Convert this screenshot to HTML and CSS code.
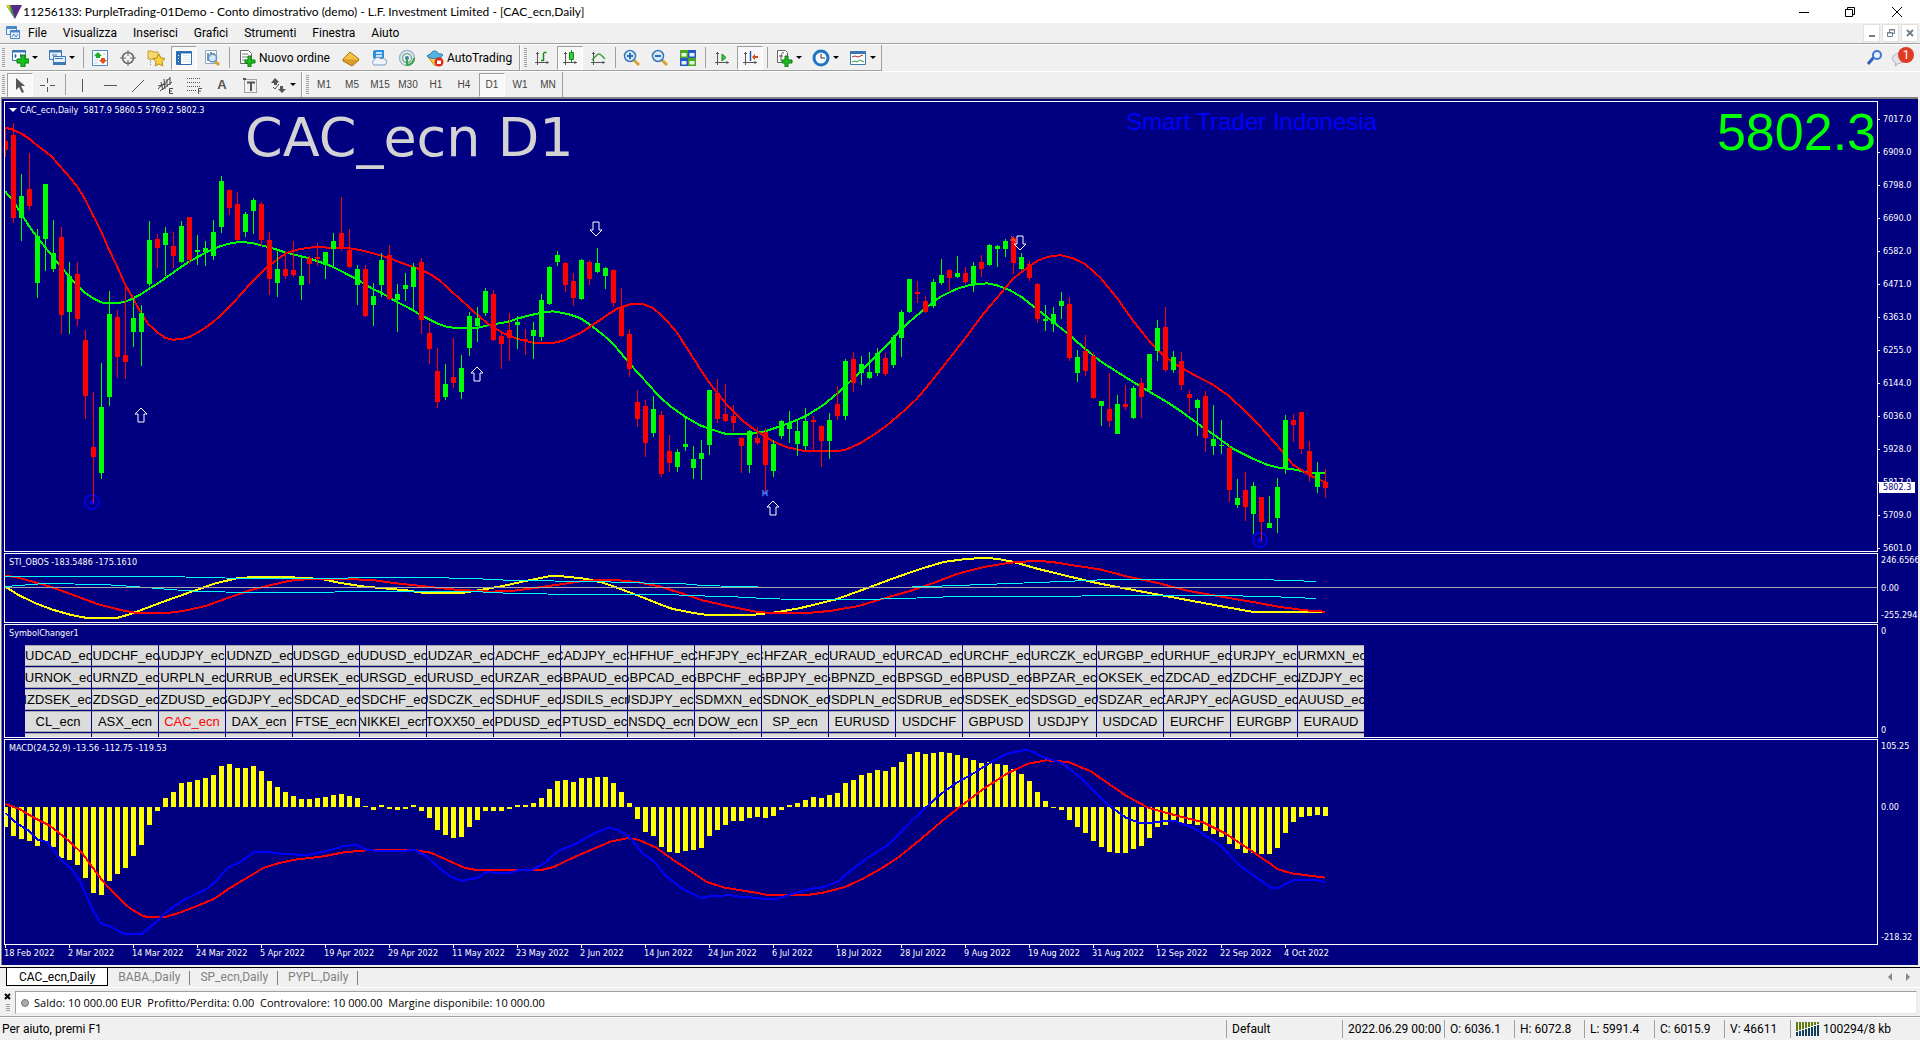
FILE: index.html
```html
<!DOCTYPE html>
<html lang="it">
<head>
<meta charset="utf-8">
<title>11256133: PurpleTrading-01Demo</title>
<link rel="stylesheet" href="styles.css">
</head>
<body>
<div class="app">
  <header class="titlebar">
    <svg class="logo" width="16" height="14" viewBox="0 0 16 14"><path d="M0 0h16L9 14z" fill="#5b2a86"/><path d="M0 0h5l4 14z" fill="#3c9a4a"/><path d="M0 0h3l2 7z" fill="#f2d21b"/></svg>
    <h1 class="title">11256133: PurpleTrading-01Demo - Conto dimostrativo (demo) - L.F. Investment Limited - [CAC_ecn,Daily]</h1>
    <div class="winbtns">
      <button class="winbtn" aria-label="Riduci"><svg width="12" height="12"><path d="M1 6.500h10" stroke="#000"/></svg></button>
      <button class="winbtn" aria-label="Ripristina"><svg width="12" height="12" fill="none" stroke="#000"><path d="M1.500 3.500h7v7h-7zM3.500 3V1.500h7v7H9"/></svg></button>
      <button class="winbtn" aria-label="Chiudi"><svg width="12" height="12" stroke="#000"><path d="M1 1l10 10M11 1L1 11"/></svg></button>
    </div>
  </header>

  <nav class="menubar">
    <svg class="menuicon" width="16" height="16" viewBox="0 0 16 16" fill="#eaf3fc" stroke="#4a86c8"><path d="M1.500 1.500h10v8h-10z"/><path d="M1 3h11" stroke-width="2"/><path d="M5.500 5.500h9v8h-9z"/><path d="M5 6.500h10" stroke-width="2"/><path d="M7 12l2-3 2 3 2-3" fill="none"/></svg>
    <a class="menu" href="#">File</a><a class="menu" href="#">Visualizza</a><a class="menu" href="#">Inserisci</a><a class="menu" href="#">Grafici</a><a class="menu" href="#">Strumenti</a><a class="menu" href="#">Finestra</a><a class="menu" href="#">Aiuto</a>
    <div class="mdibtns">
      <button class="mdibtn" aria-label="Riduci grafico"><svg width="10" height="10"><path d="M2 8h6" stroke="#71808f" stroke-width="2"/></svg></button>
      <button class="mdibtn" aria-label="Ripristina grafico"><svg width="10" height="10" fill="none" stroke="#71808f"><path d="M1.500 4.500h5v4h-5zM1 5h6M3.500 4V1.500h5v4H7M3 2h6"/></svg></button>
      <button class="mdibtn" aria-label="Chiudi grafico"><svg width="10" height="10" stroke="#71808f" stroke-width="2"><path d="M2 2l6 6M8 2L2 8"/></svg></button>
    </div>
  </nav>

  <div class="toolrow">
    <div class="tools">
      <span class="grip"></span>
      <button class="drop" aria-label="Nuovo grafico"><svg width="18" height="18" viewBox="0 0 18 18"><path d="M1.500 1.500h13v10h-13z" fill="#fff" stroke="#3a78b5"/><path d="M1 2.500h14" stroke="#3a78b5" stroke-width="2"/><path d="M4.500 5v4M3 7h3M9.500 5v3" stroke="#3a78b5"/><path d="M10 6h4v4h4v4h-4v4h-4v-4H6v-4h4z" fill="#18c01c" stroke="#0a7a10"/></svg></button>
      <button class="drop" aria-label="Profili"><svg width="18" height="18" viewBox="0 0 18 18" fill="#e8f2fb" stroke="#3a78b5"><path d="M1.500 1.500h12v9h-12z"/><path d="M1 2.500h13" stroke-width="2"/><path d="M5.500 7.500h12v8h-12z"/><path d="M5 14.500h13" stroke-width="3"/><path d="M4 6h5M7 9.500h8"/></svg></button>
      <span class="sep"></span>
      <button class="tool" aria-label="Osservatorio mercato"><svg width="18" height="18" viewBox="0 0 18 18"><path d="M1.500 1.500h15v15h-15z" fill="#fff" stroke="#4a8cc7"/><path d="M3 5h3M3 8h3M12 5h3M3 11h4M3 14h4" stroke="#b8cde0"/><path d="M7 3l4 4H9v2H5V7H3z" fill="#1fae28"/><path d="M12 15l-4-4h2V9h4v2h2z" fill="#e2501b"/></svg></button>
      <button class="tool" aria-label="Finestra dati"><svg width="18" height="18" viewBox="0 0 18 18" fill="none" stroke="#666"><circle cx="9" cy="9" r="5.500" stroke-width="1.500"/><path d="M9 1v6M9 11v6M1 9h6M11 9h6"/></svg></button>
      <button class="tool" aria-label="Navigatore"><svg width="18" height="18" viewBox="0 0 18 18"><path d="M1 2h4l1 1h5v7H1z" fill="#f6d873" stroke="#c79a28"/><path d="M3.500 11v6" stroke="#888" stroke-dasharray="1 1"/><path d="M12 5l2 4 4 .6-3 3 .8 4.400-3.800-2-3.800 2 .8-4.400-3-3L10 9z" fill="#fbd03a" stroke="#b98a14"/></svg></button>
      <button class="tool pressed" aria-label="Terminale"><svg width="18" height="18" viewBox="0 0 18 18"><path d="M1.500 2.500h15v13h-15z" fill="#fff" stroke="#2f6fb5"/><path d="M1 3.500h16" stroke="#2f6fb5" stroke-width="2"/><path d="M2 3h4v12H2z" fill="#2f6fb5"/><path d="M3 6.500h1M3 9.500h1M3 12.500h1" stroke="#fff"/><path d="M8 6.500h7M8 8.500h7M8 10.500h7M8 12.500h7" stroke="#dde6ee"/></svg></button>
      <button class="tool" aria-label="Tester strategia"><svg width="18" height="18" viewBox="0 0 18 18"><path d="M2.500 1.500h11v13h-11z" fill="#fff" stroke="#8fa7bd"/><path d="M5 4v8M8 3v5M11 4v3" stroke="#7d93a8" stroke-width="2"/><path d="M12 12l4 4" stroke="#d8a431" stroke-width="3"/><circle cx="9.500" cy="9" r="4" fill="#cbe6fa" fill-opacity=".8" stroke="#5d92c0" stroke-width="1.500"/></svg></button>
      <span class="sep"></span>
      <button class="wide"><svg width="18" height="18" viewBox="0 0 18 18"><path d="M2.500 1.500h8l3 3v10h-11z" fill="#fff" stroke="#666"/><path d="M4 5h6M4 8h6M4 11h4" stroke="#777"/><path d="M10 7h3v4h4v3h-4v4h-3v-4H7v-3h3z" fill="#18c01c" stroke="#0a7a10"/></svg>Nuovo ordine</button>
      <button class="tool" aria-label="MetaEditor"><svg width="18" height="18" viewBox="0 0 18 18"><path d="M1 10l7-7 9 7-6 6z" fill="#f2c245" stroke="#a87716"/><path d="M1 10v2l9 5 7-6" fill="#d99c25" stroke="#a87716"/></svg></button>
      <button class="tool" aria-label="Hosting"><svg width="18" height="18" viewBox="0 0 18 18"><path d="M3 2l2-1h9v9H5L3 9z" fill="#2b8fe0"/><path d="M6 4h6M6 7h6" stroke="#fff" stroke-width="1.500"/><path d="M4 16a3 3 0 010-5 4 4 0 017-1 3.500 3.500 0 014 6z" fill="#eef4fa" stroke="#7f9cc0"/></svg></button>
      <button class="tool" aria-label="Segnali"><svg width="18" height="18" viewBox="0 0 18 18" fill="none"><circle cx="9" cy="9" r="7.500" stroke="#9bb8cf" stroke-width="1.500"/><circle cx="9" cy="9" r="4.500" stroke="#7fae96" stroke-width="1.500"/><path d="M9 16a7 7 0 007-7" stroke="#3aa54a" stroke-width="2"/><circle cx="9" cy="9" r="2" fill="#3e7fc2"/><path d="M9 9v8" stroke="#3aa54a" stroke-width="2"/></svg></button>
      <button class="wide auto"><svg width="18" height="18" viewBox="0 0 18 18"><path d="M2 8l7 9 6-4V8z" fill="#f3cf52" stroke="#ba8d1f"/><path d="M1 7c1-2 3-1 4-2 0-4 7-4 7 0 1 0 3-1 5 1-3 4-12 5-16 1z" fill="#57b3e4" stroke="#2e7fb5"/><circle cx="13" cy="13" r="4.500" fill="#e02818"/><path d="M11 11.500h4v3.500h-4z" fill="#fff"/></svg>AutoTrading</button>
    </div>
    <div class="tools">
      <span class="grip"></span>
      <button class="tool" aria-label="Grafico a barre"><svg width="18" height="18" viewBox="0 0 18 18" fill="none" stroke="#555"><path d="M4.500 3v13M2 13.500h14M3 4.500h3M14 12v3"/><path d="M10.500 4v8M13.500 3.500h-3M8 11.500h3" stroke="#188a1d" stroke-width="1.500"/></svg></button>
      <button class="tool pressed" aria-label="Candele giapponesi"><svg width="18" height="18" viewBox="0 0 18 18" fill="none" stroke="#555"><path d="M4.500 3v13M2 13.500h14M3 4.500h3M14 12v3"/><path d="M10.500 1v12" stroke="#188a1d"/><path d="M8.500 3.500h4v7h-4z" fill="#2fd03a" stroke="#188a1d"/></svg></button>
      <button class="tool" aria-label="Grafico a linea"><svg width="18" height="18" viewBox="0 0 18 18" fill="none" stroke="#555"><path d="M4.500 3v13M2 13.500h14M3 4.500h3M14 12v3"/><path d="M3 11c3-3 5-6 7-6s3 2 6 5" stroke="#3a9e40" stroke-width="1.500"/></svg></button>
      <span class="sep"></span>
      <button class="tool" aria-label="Zoom avanti"><svg width="18" height="18" viewBox="0 0 18 18"><path d="M11 11l5 5" stroke="#d8a431" stroke-width="3"/><circle cx="7" cy="7" r="5.500" fill="#d5ebfb" stroke="#3a78b5" stroke-width="1.500"/><path d="M4 7h6M7 4v6" stroke="#2f6fb5" stroke-width="2"/></svg></button>
      <button class="tool" aria-label="Zoom indietro"><svg width="18" height="18" viewBox="0 0 18 18"><path d="M11 11l5 5" stroke="#d8a431" stroke-width="3"/><circle cx="7" cy="7" r="5.500" fill="#d5ebfb" stroke="#3a78b5" stroke-width="1.500"/><path d="M4 7h6" stroke="#2f6fb5" stroke-width="2"/></svg></button>
      <button class="tool" aria-label="Affianca finestre"><svg width="18" height="18" viewBox="0 0 18 18"><path d="M1 1h8v8H1zM9 9h8v8H9z" fill="#48a81e"/><path d="M9 1h8v8H9zM1 9h8v8H1z" fill="#2458c8"/><path d="M2.500 4h5v3.500h-5zM10.500 4h5v3.500h-5zM2.500 12h5v3.500h-5zM10.500 12h5v3.500h-5z" fill="#e8f2ea"/></svg></button>
      <span class="sep"></span>
      <button class="tool" aria-label="Scorrimento automatico"><svg width="18" height="18" viewBox="0 0 18 18" fill="none" stroke="#555"><path d="M4.500 3v13M2 13.500h14M3 4.500h3M14 12v3"/><path d="M9 5l4 3.500L9 12z" fill="#2fd03a" stroke="#188a1d"/></svg></button>
      <button class="tool pressed" aria-label="Sposta grafico"><svg width="18" height="18" viewBox="0 0 18 18" fill="none" stroke="#555"><path d="M4.500 3v13M2 13.500h14M3 4.500h3M14 12v3"/><path d="M9.500 2v10" stroke="#2458a8" stroke-width="1.500"/><path d="M11 8l3-3v2h3v2h-3v2z" fill="#d4491c" stroke="none"/></svg></button>
      <span class="sep"></span>
      <button class="drop" aria-label="Indicatori"><svg width="18" height="18" viewBox="0 0 18 18"><path d="M2.500 1.500h8l2 2v10h-10z" fill="#fff" stroke="#666"/><path d="M9 4c-3-1-3 2-3 8M4 7h4" fill="none" stroke="#555"/><path d="M10 7h3v4h4v3h-4v4h-3v-4H7v-3h3z" fill="#18c01c" stroke="#0a7a10"/></svg></button>
      <button class="drop" aria-label="Periodi"><svg width="18" height="18" viewBox="0 0 18 18"><circle cx="9" cy="9" r="7" fill="#f4f8fc" stroke="#1f72c4" stroke-width="3"/><path d="M9 5v4h4" fill="none" stroke="#333"/></svg></button>
      <button class="drop" aria-label="Modelli"><svg width="18" height="18" viewBox="0 0 18 18"><path d="M1.500 2.500h15v13h-15z" fill="#fff" stroke="#3a78b5"/><path d="M1 3.500h16" stroke="#3a78b5" stroke-width="3"/><path d="M3 8l3-1 3 1 5-2" fill="none" stroke="#a03a20"/><path d="M3 13l3-1 2 1 3-2 4 2" fill="none" stroke="#2f9a38"/></svg></button>
    </div>
    <div class="alerts">
      <button class="tool" aria-label="Cerca"><svg width="16" height="16" viewBox="0 0 16 16"><path d="M1 15l6-7" stroke="#2f62c4" stroke-width="3"/><circle cx="10" cy="6" r="4" fill="#eef4ff" stroke="#3f74d6" stroke-width="2"/></svg></button>
      <button class="news" aria-label="Notifiche"><svg width="24" height="20" viewBox="0 0 24 20"><path d="M9 6c-8 0-10 8-4 10l-1 3 4-3c10 0 10-10 1-10z" fill="#e3e3e8" stroke="#b0b0b8"/><circle cx="15" cy="8" r="8" fill="#df3a22"/></svg><span class="badge">1</span></button>
    </div>
  </div>

  <div class="toolrow lines">
    <div class="tools">
      <span class="grip"></span>
      <button class="tool pressed" aria-label="Cursore"><svg width="18" height="18" viewBox="0 0 18 18"><path d="M5 2v12l3-3 3 6 2-1-3-6h4z" fill="#555"/></svg></button>
      <button class="tool" aria-label="Croce"><svg width="18" height="18" viewBox="0 0 18 18"><path d="M8.500 2v5M8.500 11v5M1 9.500h5M11 9.500h5" stroke="#555"/></svg></button>
      <span class="sep"></span>
      <button class="tool" aria-label="Linea verticale"><svg width="18" height="18"><path d="M9.500 3v13" stroke="#555"/></svg></button>
      <button class="tool" aria-label="Linea orizzontale"><svg width="18" height="18"><path d="M3 9.500h13" stroke="#555"/></svg></button>
      <button class="tool" aria-label="Linea di tendenza"><svg width="18" height="18"><path d="M3 16L15 4" stroke="#555"/></svg></button>
      <button class="tool" aria-label="Canale equidistante"><svg width="18" height="18" viewBox="0 0 18 18" stroke="#444" fill="none"><path d="M1 13L13 2M3 15L15 6M4 6l2 8M7 3l1 10M10 3v8M13 1v8M1 10l8-2"/><path d="M16 12.500h-3.500v5H16M12 15h3" /></svg></button>
      <button class="tool" aria-label="Fibonacci"><svg width="18" height="18" viewBox="0 0 18 18" stroke="#555" fill="none"><path d="M2 2.500h14M2 6.500h14M2 10.500h14M2 14.500h9" stroke-dasharray="1 1"/><path d="M13.500 18v-5.500H17M13 15h3"/></svg></button>
      <button class="tool letter" aria-label="Testo">A</button>
      <button class="tool" aria-label="Etichetta"><svg width="18" height="18" viewBox="0 0 18 18" stroke="#555" fill="none"><path d="M3.500 3.500h12v13h-12z" stroke-dasharray="1 1"/><path d="M6 6.500h8M10 6v9" stroke-width="2"/><path d="M2 2h3v2H2z" fill="#555" stroke="none"/></svg></button>
      <button class="drop" aria-label="Frecce"><svg width="18" height="18" viewBox="0 0 18 18" fill="#555"><path d="M6 2l4 4-2 1v2H5V7H2zM13 17l-4-4h2v-3h3v3h3z"/><path d="M4 11l2 2 4-5" fill="none" stroke="#555"/></svg></button>
    </div>
    <div class="tools">
      <span class="grip"></span>
      <button class="tool">M1</button><button class="tool">M5</button><button class="tool">M15</button><button class="tool">M30</button><button class="tool">H1</button><button class="tool">H4</button><button class="tool pressed">D1</button><button class="tool">W1</button><button class="tool">MN</button>
    </div>
  </div>

  <main class="chart">
    <section class="panel">
      <svg class="plot" id="price"></svg>
      <p class="caption"><span class="caret"></span>CAC_ecn,Daily&nbsp; 5817.9 5860.5 5769.2 5802.3</p>
      <p class="symbol">CAC_ecn D1</p>
      <p class="brand">Smart Trader Indonesia</p>
      <p class="quote">5802.3</p>
    </section>
    <div class="axis prices">
      <span>7017.0</span><span>6909.0</span><span>6798.0</span><span>6690.0</span><span>6582.0</span><span>6471.0</span><span>6363.0</span><span>6255.0</span><span>6144.0</span><span>6036.0</span><span>5928.0</span><span>5817.0</span><span>5709.0</span><span>5601.0</span>
      <b class="last">5802.3</b>
    </div>

    <section class="panel">
      <svg class="plot" id="obos"></svg>
      <p class="caption">STI_OBOS -183.5486 -175.1610</p>
    </section>
    <div class="axis"><span>246.6566</span><span>0.00</span><span>-255.2944</span></div>

    <section class="panel">
      <p class="caption">SymbolChanger1</p>
      <div class="symbols" id="symbols"></div>
    </section>
    <div class="axis"><span>0</span><span>0</span></div>

    <section class="panel">
      <svg class="plot" id="macd"></svg>
      <p class="caption">MACD(24,52,9) -13.56 -112.75 -119.53</p>
    </section>
    <div class="axis macd"><span>105.25</span><span>0.00</span><span>-218.32</span></div>

    <div class="dates"><span>18 Feb 2022</span><span>2 Mar 2022</span><span>14 Mar 2022</span><span>24 Mar 2022</span><span>5 Apr 2022</span><span>19 Apr 2022</span><span>29 Apr 2022</span><span>11 May 2022</span><span>23 May 2022</span><span>2 Jun 2022</span><span>14 Jun 2022</span><span>24 Jun 2022</span><span>6 Jul 2022</span><span>18 Jul 2022</span><span>28 Jul 2022</span><span>9 Aug 2022</span><span>19 Aug 2022</span><span>31 Aug 2022</span><span>12 Sep 2022</span><span>22 Sep 2022</span><span>4 Oct 2022</span></div>
  </main>

  <nav class="tabs">
    <button class="tab active">CAC_ecn,Daily</button><button class="tab">BABA.,Daily</button><button class="tab">SP_ecn,Daily</button><button class="tab">PYPL.,Daily</button>
    <div class="scroll"><button class="arrow left" aria-label="Indietro"></button><button class="arrow right" aria-label="Avanti"></button></div>
  </nav>

  <section class="terminal">
    <div class="termside"><button class="termclose" aria-label="Chiudi terminale"><svg width="7" height="7" stroke="#000" stroke-width="2"><path d="M1 1l5 5M6 1L1 6"/></svg></button><span class="hgrip"></span></div>
    <p class="balance"><span class="dot"></span>Saldo: 10 000.00 EUR&nbsp; Profitto/Perdita: 0.00&nbsp; Controvalore: 10 000.00&nbsp; Margine disponibile: 10 000.00</p>
  </section>

  <footer class="status">
    <span class="help">Per aiuto, premi F1</span>
    <span class="cell w116">Default</span>
    <span class="cell w102">2022.06.29 00:00</span>
    <span class="cell w70">O: 6036.1</span>
    <span class="cell w70">H: 6072.8</span>
    <span class="cell w70">L: 5991.4</span>
    <span class="cell w70">C: 6015.9</span>
    <span class="cell w66">V: 46611</span>
    <span class="cell w130"><svg width="24" height="14" viewBox="0 0 24 14"><path d="M1 0v9M4 0v8M7 0v7M10 0v6M13 0v5M16 0v4M19 0v3M22 0v2" stroke="#5f7d0c" stroke-width="2"/><path d="M1 14v-4M4 14V9M7 14V8M10 14V7M13 14V6M16 14V5M19 14V4M22 14V3" stroke="#123f5c" stroke-width="2"/></svg>100294/8 kb</span>
  </footer>
</div>
<script src="chart.js"></script>
</body>
</html>
```
FILE: styles.css
```css
* { box-sizing: border-box; }
body { margin: 0; background: #f0f0f0; color: #000; font: 12px/16px Roboto, "Noto Sans", sans-serif; }
p, h1 { margin: 0; font-weight: normal; }
button { margin: 0; padding: 0; border: 0; background: none; color: inherit; font: inherit; }
a { color: inherit; text-decoration: none; }
svg { display: block; flex: none; }

.app { display: flex; flex-direction: column; min-height: 100vh; }

.titlebar { display: flex; align-items: center; height: 23px; padding-left: 6px; background: #fff; }
.title { flex: 1; padding-left: 1px; font: 12px/16px Lato, "Noto Sans", sans-serif; white-space: nowrap; }
.winbtns { display: flex; height: 20px; }
.winbtn { display: grid; place-items: center; width: 46px; }
.winbtn:last-child { width: 47px; }

.menubar { display: flex; align-items: center; height: 21px; border-bottom: 1px solid #a0a0a0; }
.menuicon { margin: 0 6px 0 5px; }
.menu { margin-right: 16px; }
.menu:first-of-type { padding-left: 1px; }
.mdibtns { display: flex; gap: 2px; margin-left: auto; padding-right: 2px; }
.mdibtn { display: grid; place-items: center; width: 17px; height: 18px; background: #fff; border: 1px solid #e0e0e0; }

.toolrow { display: flex; height: 27px; border-top: 1px solid #fff; }
.tools { display: flex; align-items: center; padding-left: 2px; border-right: 1px solid #a0a0a0; border-bottom: 1px solid #a0a0a0; }
.toolrow .tools + .tools { padding-left: 3px; border-left: 1px solid #fff; }
.grip { width: 3px; height: 20px; margin-right: 1px; background: repeating-linear-gradient(#a0a0a0 0 1px, #f0f0f0 1px 2px); }
.tool { display: grid; place-items: center; width: 28px; height: 24px; }
.pressed { border: 1px solid; border-color: #a0a0a0 #fff #fff #a0a0a0; background: #f8f8f8; width: 26px; margin: 0 1px; }
.sep { width: 6px; height: 21px; background: linear-gradient(#a0a0a0, #a0a0a0) 3px 0 / 1px 100% no-repeat; }
.drop { display: flex; align-items: center; gap: 3px; width: 37px; height: 24px; padding-left: 5px; }
.drop::after, .caret { content: ""; border: 3px solid transparent; border-top-color: #000; border-bottom: 0; }
.wide { display: flex; align-items: center; gap: 3px; height: 24px; width: 105px; padding-left: 6px; white-space: nowrap; }
.wide.auto { width: 98px; padding-left: 5px; }
.lines { height: 26px; }
.lines .tools { border-bottom: 0; }
.lines .tool { color: #444; font: 10px/12px "Liberation Sans", sans-serif; }
.lines .letter { font: bold 13px/16px "Liberation Sans", sans-serif; color: #555; }
.alerts { display: flex; align-items: center; margin-left: auto; padding-right: 5px; gap: 2px; height: 24px; }
.news { position: relative; height: 20px; }
.badge { position: absolute; right: 1px; top: 0; width: 16px; line-height: 16px; text-align: center; color: #fff; }

.chart { flex: 1; display: grid; grid-template-columns: minmax(0, 1fr) 40px; grid-template-rows: minmax(451px, 1fr) 70px 114px 206px 19px; row-gap: 1px; margin-right: 2px; margin-left: 1px; padding: 2px 0 0 2px; border-top: 2px solid #808080; border-left: 1px solid #808080; background: #000080; color: #fff; overflow: hidden; font: 9px/10px "DejaVu Sans Condensed", "Noto Sans", sans-serif; }
.panel { position: relative; border: 1px solid #fff; overflow: hidden; }
.plot { width: 100%; height: 100%; position: absolute; inset: 0; }
.caption { position: relative; display: flex; align-items: center; padding: 3px 4px; white-space: nowrap; }
.caret { border-width: 4px 4px 0; border-top-color: #fff; margin-right: 3px; }
.symbol, .brand, .quote { position: absolute; white-space: nowrap; }
.symbol { left: 240px; top: 4px; font: 54px/64px "DejaVu Sans", sans-serif; color: #d3d3d3; }
.brand { right: 500px; top: 6px; font: 24px/28px "Liberation Sans", sans-serif; color: #0000ff; }
.quote { right: 1px; top: 0; font: 52px/60px "Liberation Sans", sans-serif; color: #00ff00; }

.axis { display: flex; flex-direction: column; justify-content: space-between; padding: 2px 0 3px 3px; min-width: 0; }
.axis.macd span:nth-child(2) { margin: 51px 0 auto; }
.axis.macd { justify-content: flex-start; }
.prices { position: relative; justify-content: flex-start; gap: 23px; height: 451px; padding: 13px 0 0 5px; }
.prices span { position: relative; }
.prices span::before { content: ""; position: absolute; left: -5px; top: 5px; width: 2px; height: 1px; background: #fff; }
.last { position: absolute; left: 1px; top: 381px; width: 36px; padding-left: 4px; background: #fff; color: #000080; font-weight: normal; line-height: 11px; }

.symbols { display: grid; grid-template-columns: repeat(20, 66px); grid-auto-rows: 21px; gap: 1px; padding: 4px 0 0 20px; }
.sym { display: flex; justify-content: center; align-items: center; overflow: hidden; border: 1px solid #a9a9a9; border-width: 1px 0; background: #dcdcdc; color: #000; font: 13px/18px "Liberation Sans", sans-serif; white-space: nowrap; }
.sym.on { color: #ff0000; }

.dates { grid-column: 1 / -1; display: flex; margin-top: -1px; padding-left: 1px; }
.dates span { position: relative; flex: none; width: 64px; line-height: 17px; white-space: nowrap; text-indent: -1px; }
.dates span::before { content: ""; position: absolute; left: 0; top: 0; width: 1px; height: 3px; background: #fff; }

.tabs { display: flex; height: 21px; margin-top: 2px; padding: 0 0 1px 6px; border-top: 1px solid #000; border-bottom: 1px solid #fff; }
.tab { padding: 0 10px; color: #808080; background: linear-gradient(#808080, #808080) right 3px / 1px 14px no-repeat; }
.tab.active { padding: 0 12px; border: 1px solid #000; border-top: 0; background: #fff; color: #000; }
.scroll { display: flex; align-items: center; gap: 14px; margin-left: auto; padding-right: 10px; }
.arrow { border: 4px solid transparent; }
.arrow.left { border-left: 0; border-right-color: #888; }
.arrow.right { border-right: 0; border-left-color: #888; }

.terminal { display: flex; padding: 3px 3px 2px 0; border-bottom: 1px solid #a0a0a0; }
.termside { display: flex; flex-direction: column; align-items: center; gap: 4px; width: 15px; padding-top: 2px; }
.termclose { height: 7px; }
.hgrip { width: 4px; height: 8px; background: repeating-linear-gradient(#a0a0a0 0 1px, #f0f0f0 1px 2px); }
.balance { flex: 1; display: flex; align-items: center; height: 23px; padding-left: 5px; border: 1px solid; border-color: #a0a0a0 #e8e8e8 #e8e8e8 #a0a0a0; background: #fff; white-space: nowrap; font: 11px/16px "Open Sans", "Noto Sans", sans-serif; }
.dot { width: 8px; height: 8px; margin-right: 5px; border: 1px solid #777; border-radius: 4px; background: #aaa; }

.status { display: flex; align-items: center; height: 23px; padding-left: 2px; border-top: 1px solid #fff; white-space: nowrap; }
.help { flex: 1; }
.cell { display: flex; align-items: center; gap: 3px; height: 18px; padding-left: 5px; border-left: 1px solid #a0a0a0; }
.w116 { width: 116px; }
.w102 { width: 102px; }
.w70 { width: 70px; }
.w66 { width: 66px; }
.w130 { width: 130px; }
```
FILE: chart.js
```js
const NS = 'http://www.w3.org/2000/svg';
const UP = '#00ff00', DOWN = '#ff0000', STEP = 8;

function add(parent, tag, attrs) {
  const el = document.createElementNS(NS, tag);
  for (const k in attrs) el.setAttribute(k, attrs[k]);
  parent.appendChild(el);
  return el;
}

/* Three value units per pixel; each segment is [x origin, x units per pixel, points].
   Hairlines are snapped to pixel rows so that flat stretches stay solid. */
function trace(svg, top, color, width, segments) {
  const pts = segments.flatMap(([ox, k, s]) => s.trim().split(/\s+/).map(p => {
    const [x, y] = p.split(',').map(Number);
    const py = (y + 1) / 3 - top;
    return `${(ox + x / k - 5).toFixed(1)},${width === 1 ? Math.floor(py) + 0.5 : py.toFixed(1)}`;
  }));
  add(svg, 'polyline', { points: pts.join(' '), fill: 'none', stroke: color, 'stroke-width': width, 'shape-rendering': 'crispEdges' });
}

/* Candles: direction, high, body top, body bottom, low. */
const candles = `R97,138,165,185 R84,120,369,384 G237,303,369,438 R174,282,333,345 G402,423,564,609 G267,267,432,528 G375,474,522,531 R396,426,660,717 G501,543,651,717 R501,537,672,693
R705,735,903,972 R891,1056,1086,1224 G804,936,1134,1152 G588,657,906,933 R645,666,786,849 R570,780,801,852 G609,669,711,756 G630,654,711,813 G378,435,567,573 R417,432,459,519
G396,414,450,543 R411,453,483,519 G378,393,501,504 R366,366,495,507 G420,465,471,510 G438,459,471,513 G375,411,483,495 G243,258,396,414 R282,285,339,360 R291,327,435,438
G351,357,411,426 G309,315,348,417 R321,327,435,453 R411,435,552,600 G465,522,564,606 R468,522,543,552 R438,525,540,546 G486,543,570,615 R483,489,507,567 R444,486,492,513
G471,471,510,552 G414,438,462,516 R306,414,462,468 R402,465,516,519 G510,522,570,630 R510,522,663,666 G564,603,630,693 G474,495,570,606 R450,480,612,615 G567,597,615,711
G534,570,582,618 G504,516,576,645 R489,501,675,717 R684,714,762,807 R759,828,921,939 G807,867,906,915 R729,846,864,879 G780,819,891,912 G651,663,759,783 G636,669,693,741
G579,588,654,663 R585,597,735,738 R714,723,747,822 R654,705,729,798 G663,681,690,762 R702,732,738,780 G681,705,723,792 G597,615,726,738 G513,516,627,630 G468,480,501,513
R501,504,570,591 R534,558,609,633 G492,495,612,615 R495,501,552,570 G459,504,531,534 G516,519,543,582 R522,525,624,636 R579,639,723,726 R702,717,822,846 R885,921,972,996
R915,933,1044,1086 G903,942,1014,1026 R948,960,1137,1146 R1020,1068,1104,1131 G1062,1071,1116,1131 G963,1047,1056,1068 G1053,1092,1119,1152 G1035,1074,1092,1155 G885,885,1050,1080 R852,894,972,984
R867,957,978,981 R930,963,984,1008 R1026,1029,1053,1134 G1005,1008,1110,1134 R996,1029,1044,1050 R999,1011,1110,1195 G1035,1047,1128,1146 G975,978,1023,1032 G948,984,1002,1044 G975,1008,1047,1083
G939,978,1053,1065 R963,975,981,1065 R990,993,1038,1116 G954,975,1038,1092 R873,927,963,975 G792,798,963,975 R771,792,864,891 G783,807,834,870 G771,831,849,852 G759,774,834,843
R774,789,837,843 G720,726,810,819 G645,651,729,786 G552,552,651,654 R558,591,597,624 R603,618,651,654 G552,561,633,639 G492,540,564,570 R522,525,549,591 G483,534,546,549
R516,534,561,567 G501,513,570,591 R480,501,522,546 G447,450,510,513 G450,453,462,516 G432,438,462,486 R423,429,504,537 G474,486,522,525 R498,507,549,558 R564,567,672,684
G630,672,678,708 G636,657,687,711 G591,618,633,672 R606,627,789,798 G765,786,834,861 R720,768,828,843 R771,783,909,912 G918,918,933,993 R834,942,978,996 G900,927,1017,1017
R870,927,936,945 G873,879,969,972 R849,864,906,969 G777,777,885,888 G675,699,768,798 R636,696,825,831 G768,786,825,834 R771,798,870,885 R885,897,909,954 G912,915,939,1023
R888,903,1029,1071 G930,1032,1053,1080 G975,1050,1053,1077 R1050,1059,1185,1221 G1152,1209,1230,1239 R1131,1185,1236,1278 G1161,1173,1257,1317 R1206,1206,1281,1338 G1203,1284,1299,1299 G1149,1176,1269,1314
G960,975,1119,1137 R957,975,990,1041 R951,951,1062,1077 R1038,1068,1140,1161 G1101,1131,1176,1194 R1122,1161,1179,1209`.split(/\s+/);

const price = document.getElementById('price');
const arrow = (x, y, dir) => add(price, 'path', {
  d: 'M0 -7L6 -1H3V7H-3V-1H-6Z', transform: `translate(${x - 5} ${y - 102})${dir < 0 ? ' scale(1 -1)' : ''}`, fill: 'none', stroke: '#fff', 'stroke-width': 1
});
for (const x of [[92, 502], [1260, 540]]) {
  add(price, 'circle', { cx: x[0] - 5, cy: x[1] - 102, r: 7, fill: 'none', stroke: '#0000ff', 'stroke-width': 1.5 });
  add(price, 'circle', { cx: x[0] - 5, cy: x[1] - 102, r: 2.5, fill: '#0000ff' });
}
trace(price, 7, UP, 2, [[0, 1, `5,288 13,315 21,355 29,392 37,425 45,455 53,485 61,514 69,543 77,570 85,592 93,609 101,621 107,624 115,624 125,620 133,609 141,597 149,580 157,566 165,549 173,532 181,515 189,499 197,486 205,473 213,461 221,452 229,445 237,441 245,441 253,444 261,450 269,456 277,463 285,471 293,477 301,483 309,489 317,497 325,505 333,515 341,527 349,540 357,552 365,567 373,581 381,592 389,606 397,620 405,632 413,645 421,660 429,672 437,684 445,693 453,697 461,699 477,698 488,690 507,680 523,665 540,653 553,648 568,656 580,668 590,688 603,718 613,745 627,795 637,830 648,865 658,900 670,932 685,964 700,990 717,1008 727,1017 748,1017 765,1008 782,991 797,974 807,960 823,930 837,895 853,850 870,800 887,750 900,705 913,670 925,640 940,605 957,580 970,569 987,564 997,570 1010,585 1022,606 1033,632 1047,665 1067,713 1083,755 1100,797 1120,835 1143,878 1167,920 1183,952 1200,990 1217,1025 1233,1060 1253,1090 1267,1108 1280,1118 1293,1122 1307,1131 1325,1134`]]);
trace(price, 7, DOWN, 2, [[0, 1, `5,97 12,102 22,116 30,132 37,150 45,168 52,185 60,213 68,240 77,273 86,316 93,360 100,400 108,456 117,513 125,567 133,609 140,648 148,685 157,710 165,727 173,733 182,731 190,724 200,708 213,681 227,642 240,600 253,556 267,516 277,493 287,472 300,461 313,456 323,456 337,459 348,458 360,464 373,474 387,486 400,501 417,519 430,536 440,556 450,584 467,630 479,663 490,690 503,713 517,730 533,742 553,743 563,736 580,714 593,688 607,660 617,640 632,625 642,625 653,638 665,670 677,712 688,763 700,820 707,852 715,885 727,928 742,975 757,1008 773,1038 787,1056 803,1066 813,1068 837,1068 847,1062 860,1044 873,1020 887,990 900,957 917,910 933,852 950,787 967,722 983,657 1000,597 1013,550 1027,518 1037,497 1047,485 1060,479 1073,489 1085,506 1100,546 1117,608 1133,676 1150,740 1163,780 1177,810 1193,837 1213,868 1228,900 1243,941 1260,993 1277,1050 1293,1108 1310,1140 1325,1161`]]);
candles.forEach((c, i) => {
  const [hi, top, bottom, lo] = c.slice(1).split(',').map(v => Math.round(v / 3) - 7);
  const fill = c[0] === 'G' ? UP : DOWN, x = i * STEP;
  add(price, 'rect', { x, y: hi, width: 1, height: lo - hi, fill });
  add(price, 'rect', { x: x - 2, y: top, width: 5, height: Math.max(1, bottom - top), fill });
});
arrow(141, 415, 1); arrow(477, 374, 1); arrow(773, 508, 1);
arrow(596, 229, -1); arrow(1020, 243, -1);
add(price, 'path', { d: 'M757 388l6 6M763 388l-6 6M757 391h6', stroke: '#4169e1', 'stroke-width': 1.5 });
add(price, 'path', { d: 'M1006 134l5 6M1005 138h5', stroke: '#ff6a3c', 'stroke-width': 1 });

const obos = document.getElementById('obos');
trace(obos, 9, '#ffff00', 2, [[0, 2.24, `12,124 40,148 80,174 120,194 160,209 195,218 262,218 290,207 330,187 370,167 410,148 440,134 480,115 530,99 575,94 640,95 720,101 760,112 810,123 860,129 910,135 950,143 1035,143 1080,133 1130,121 1180,106 1230,93 1260,93 1310,100 1350,112 1380,126 1420,146 1460,167 1500,188 1520,195`],
  [680, 2.24, `0,195 30,203 65,210 155,210 220,200 270,188 350,162 420,128 480,98 540,70 590,50 640,41 680,38 710,40 745,49 800,70 870,93 930,112 1000,130 1080,150 1160,170 1230,187 1285,200 1445,201`]]);
trace(obos, 9, DOWN, 2, [[0, 2.24, `12,92 35,95 65,106 110,123 150,142 180,157 220,177 270,194 310,204 370,204 410,197 460,182 510,158 560,135 600,121 650,106 700,100 780,101 840,105 880,113 950,123 1010,132 1100,139 1150,136 1210,126 1260,116 1310,106 1380,104 1430,111 1480,124 1522,142`],
  [680, 2.24, `0,142 50,165 110,183 170,199 210,204 280,204 340,196 400,182 460,158 520,135 570,112 620,86 680,65 740,52 790,47 830,49 880,60 940,72 1000,93 1070,113 1140,137 1200,151 1280,169 1340,184 1400,195 1445,199`]]);
trace(obos, 9, '#00ffff', 1, [[0, 2.24, `12,92 380,92 450,97 560,100 700,99 860,95 950,95 1060,98 1150,104 1330,109 1480,113`],
  [680, 2.24, `0,114 50,119 130,124 220,126 350,127 487,125 620,121 740,114 860,108 960,103 1290,103 1370,106 1425,109`]]);
trace(obos, 9, '#00ffff', 1, [[0, 2.24, `12,124 100,115 230,116 300,122 380,131 450,138 560,142 700,141 800,137 1060,138 1150,143 1300,146 1520,148`],
  [680, 2.24, `0,149 110,153 190,159 260,163 400,162 500,158 620,154 840,152 960,150 1200,149 1320,154 1425,160`]]);
add(obos, 'rect', { x: 0, y: 33, width: '100%', height: 1, fill: '#a9a9a9' });

const macd = document.getElementById('macd');
const ZERO = 216;
const bars = [276,303,312,318,333,318,336,369,375,390,429,474,480,438,417,399,363,330,270,228,189,171,144,141,135,129,120,93,87,99,99,93,108,138,156,171,183,192,192,189,186,180,177,183,189,213,225,210,222,225,222,210,228,249,285,300,309,306,276,255,228,228,228,222,210,210,204,189,162,138,135,141,129,129,126,126,144,171,204,252,291,303,336,351,354,348,345,339,303,285,270,258,258,249,246,249,243,225,210,204,195,186,189,180,174,144,135,120,114,105,108,96,81,57,51,57,54,51,54,60,69,75,84,81,87,90,102,117,138,171,198,219,225,255,276,294,318,336,351,354,354,342,333,309,276,270,261,264,267,270,288,297,306,327,342,354,354,357,357,339,294,261,246,243,240,243];
bars.forEach((v, i) => {
  const a = Math.min(v, ZERO) / 3 - 5, h = Math.abs(v - ZERO) / 3;
  add(macd, 'rect', { x: i * STEP - 2, y: a, width: 5, height: h, fill: '#ffff00' });
});
trace(macd, 5, DOWN, 2, [[0, 2.24, `12,206 45,222 80,250 110,270 145,306 185,355 205,392 230,437 260,480 290,518 320,542 335,546 370,545 400,533 440,513 480,490 515,458 550,430 590,398 620,385 660,373 720,364 770,351 820,345 930,345 965,352 1000,373 1040,397 1070,405 1210,405 1240,395 1290,363 1330,340 1370,318 1405,309 1430,313 1470,337 1500,366 1520,385`],
  [680, 2.24, `0,387 60,440 100,457 170,472 200,480 280,480 320,472 370,455 410,430 450,400 490,365 530,322 580,265 620,222 680,160 735,113 780,85 820,75 870,80 920,108 960,145 1000,182 1050,218 1110,240 1170,260 1220,293 1260,328 1300,365 1340,402 1370,414 1445,427`]]);
trace(macd, 5, '#0000ff', 2, [[0, 2.24, `12,233 30,256 65,287 85,314 105,320 140,378 160,400 180,440 210,530 228,567 245,572 280,597 317,597 345,565 375,528 410,495 460,463 480,443 510,397 535,383 570,350 600,350 630,356 690,359 740,344 770,332 798,329 825,345 870,347 930,345 955,362 985,400 1015,428 1035,436 1070,427 1090,411 1140,413 1160,405 1190,405 1220,383 1250,347 1290,326 1320,302 1360,278 1380,281 1410,305 1440,355 1465,378 1490,420 1520,452`],
  [680, 2.24, `0,456 20,470 48,489 70,482 115,480 140,486 175,487 190,492 215,492 245,478 290,461 320,456 355,438 380,408 410,378 440,350 465,330 495,290 520,255 560,205 585,175 620,142 660,112 700,78 730,57 770,44 785,46 815,66 855,83 900,130 960,210 1000,248 1030,263 1055,263 1080,258 1110,258 1150,277 1210,330 1255,392 1290,425 1325,458 1340,458 1375,434 1425,434 1445,441`]]);

const ecn = `AUDCAD AUDCHF AUDJPY AUDNZD AUDSGD AUDUSD AUDZAR CADCHF CADJPY CHFHUF CHFJPY CHFZAR EURAUD EURCAD EURCHF EURCZK EURGBP EURHUF EURJPY EURMXN
EURNOK EURNZD EURPLN EURRUB EURSEK EURSGD EURUSD EURZAR GBPAUD GBPCAD GBPCHF GBPJPY GBPNZD GBPSGD GBPUSD GBPZAR NOKSEK NZDCAD NZDCHF NZDJPY
NZDSEK NZDSGD NZDUSD SGDJPY USDCAD USDCHF USDCZK USDHUF USDILS USDJPY USDMXN USDNOK USDPLN USDRUB USDSEK USDSGD USDZAR ZARJPY XAGUSD XAUUSD
CL ASX CAC DAX FTSE NIKKEI STOXX50 XPDUSD XPTUSD NSDQ DOW SP`.split(/\s+/).map(s => s + '_ecn');
const plain = 'EURUSD USDCHF GBPUSD USDJPY USDCAD EURCHF EURGBP EURAUD'.split(' ');
const grid = document.getElementById('symbols');
for (const name of [...ecn, ...plain, ...Array(20).fill('')]) {
  const b = document.createElement('button');
  b.className = name === 'CAC_ecn' ? 'sym on' : 'sym';
  b.textContent = name;
  grid.appendChild(b);
}
```
